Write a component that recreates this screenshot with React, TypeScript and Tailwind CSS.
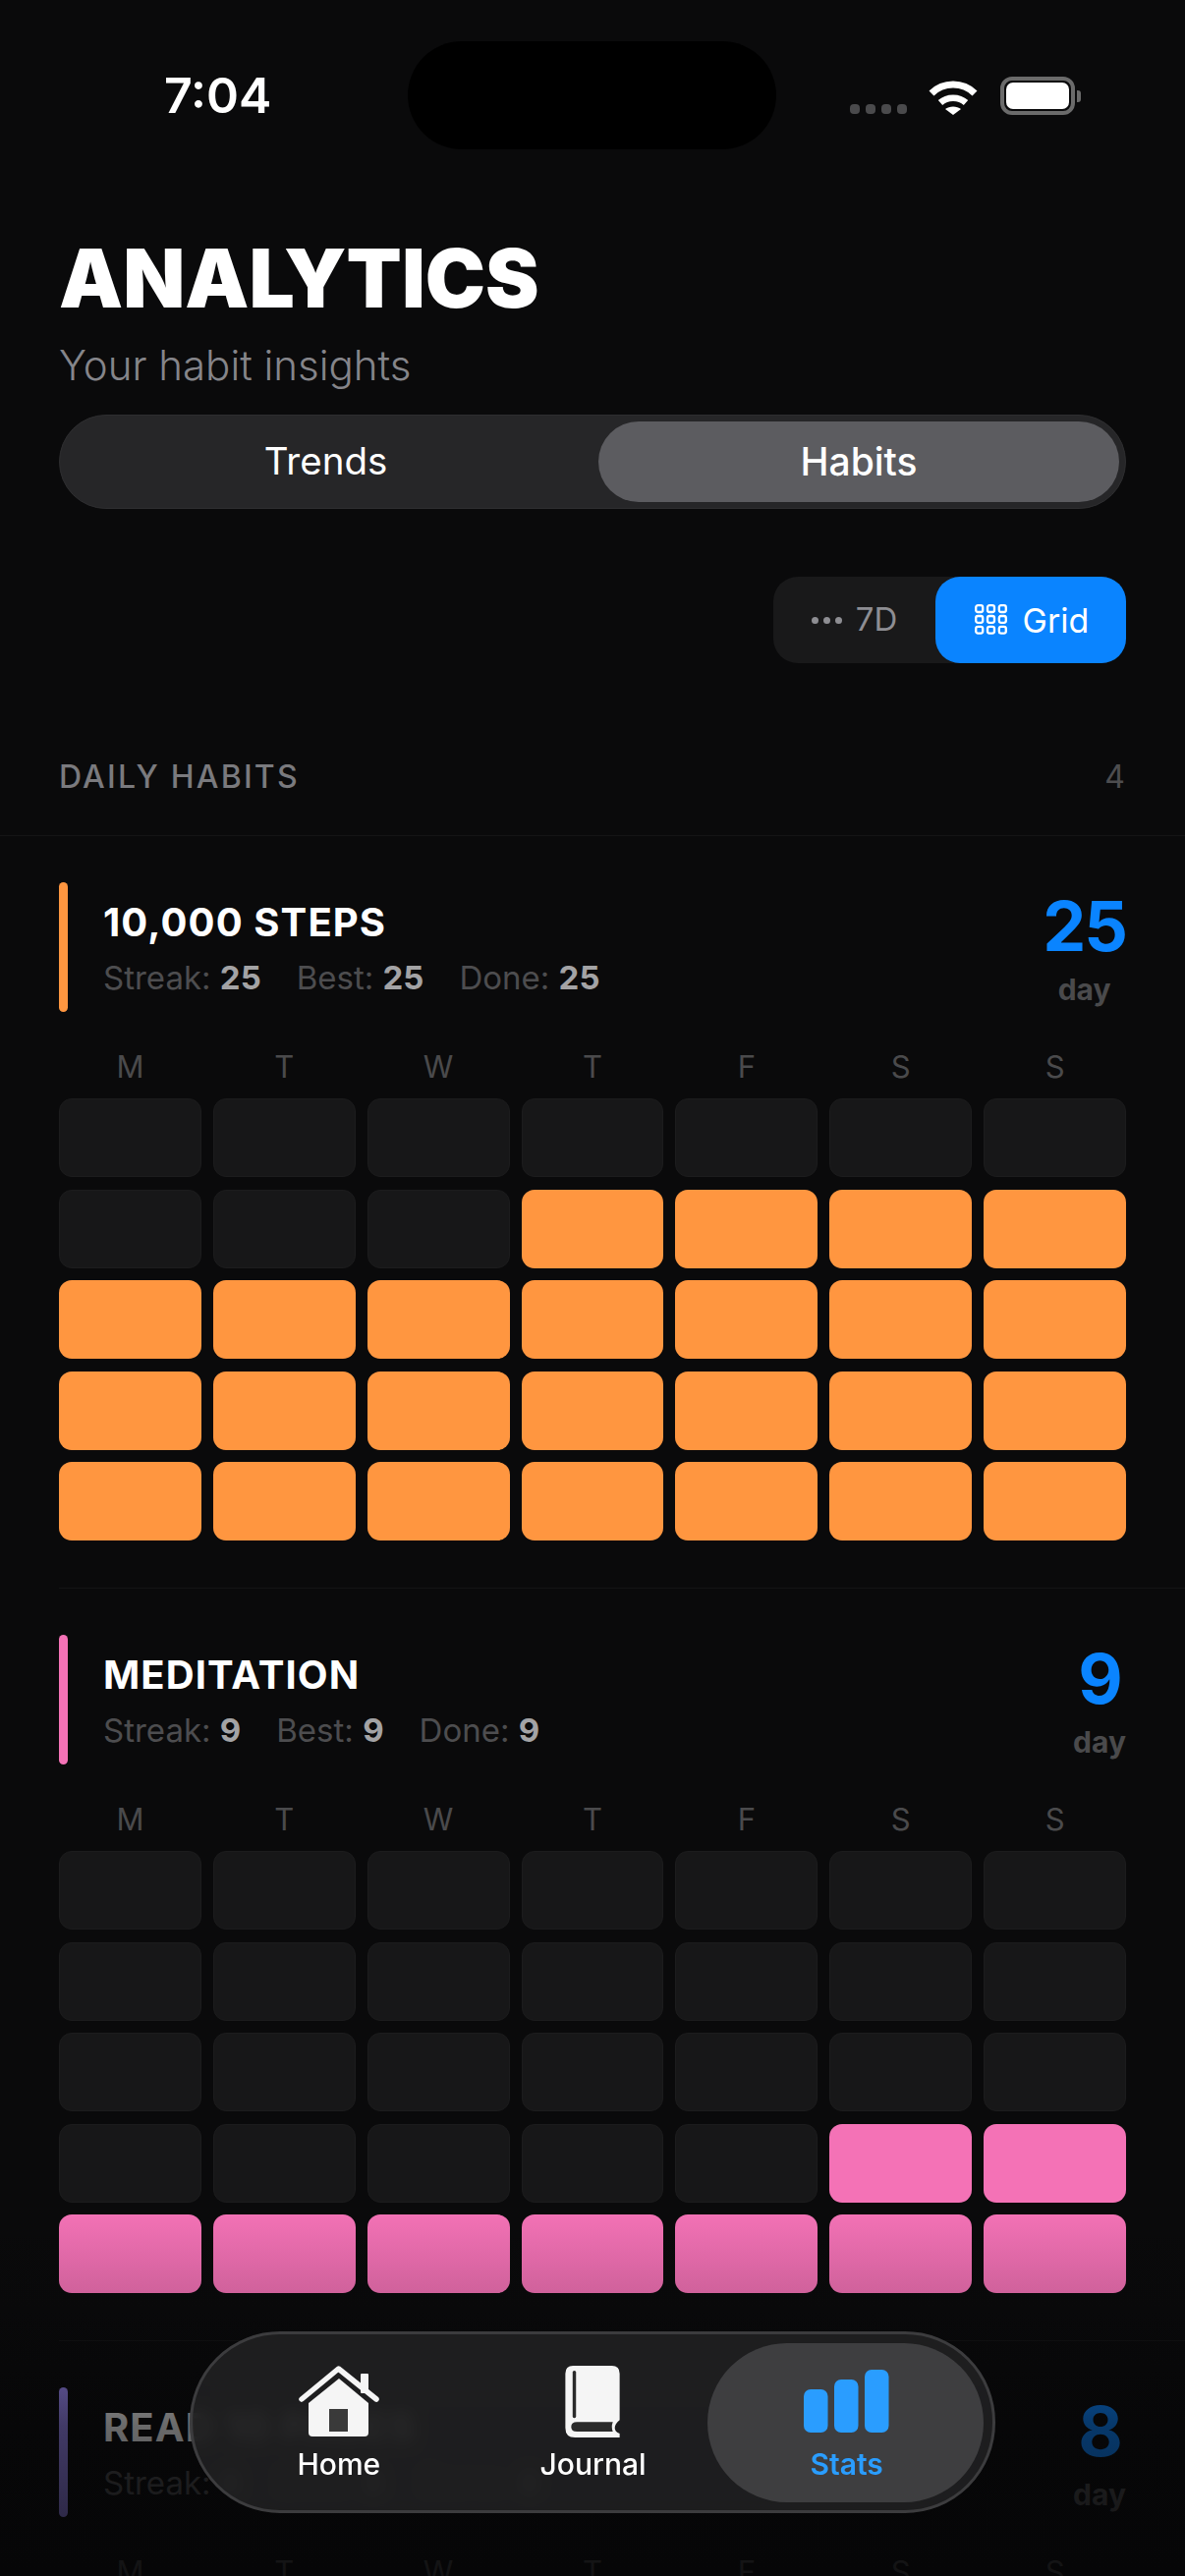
import React from "react";

const days = ["M", "T", "W", "T", "F", "S", "S"];

const habits = [
  { name: "10,000 STEPS", n: 25, bar: "bg-[#ff9640]", fill: "bg-[#ff9640]" },
  { name: "MEDITATION", n: 9, bar: "bg-[#f472b6]", fill: "bg-[#f472b6]" },
  { name: "READ 10 PAGES", n: 8, bar: "bg-[#9a88f5]", fill: "bg-[#9a88f5]" },
];

function Wifi() {
  return (
    <svg width="50" height="37" viewBox="0 0 50 37" fill="none">
      <path d="M3 15 C15 3 35 3 47 15" stroke="#fff" strokeWidth="7" />
      <path d="M12 24.5 C19 18 31 18 38 24.5" stroke="#fff" strokeWidth="6.5" />
      <path d="M17 31 C21 27.5 29 27.5 33 31 L25 37 Z" fill="#fff" />
    </svg>
  );
}

function Battery() {
  return (
    <div className="flex items-center gap-[2px]">
      <div className="w-[76px] h-[39px] rounded-[12px] border-[4px] border-[#6b6b6b] p-[2px]">
        <div className="w-full h-full rounded-[7px] bg-white" />
      </div>
      <div className="w-[4px] h-[12px] rounded-r-[3px] bg-[#6b6b6b]" />
    </div>
  );
}

function GridIcon() {
  const pts = [0, 1, 2];
  return (
    <svg width="33" height="32" viewBox="0 0 33 32" fill="none">
      {pts.map((r) =>
        pts.map((c) => (
          <rect key={`${r}-${c}`} x={1.2 + c * 11.8} y={1.2 + r * 10.8} width="7" height="6.8" rx="2" stroke="#fff" strokeWidth="2.3" />
        ))
      )}
    </svg>
  );
}

function HomeIcon() {
  return (
    <svg width="82" height="73" viewBox="0 0 82 73" fill="none">
      <rect x="63" y="8" width="8" height="20" rx="1" fill="#f5f5f5" />
      <path d="M3 34 L40.5 3 L79 34" stroke="#f5f5f5" strokeWidth="5.5" strokeLinecap="round" strokeLinejoin="round" />
      <path d="M41 13 L71 38 V68 Q71 72 67 72 H14 Q10 72 10 68 V38 Z" fill="#f5f5f5" />
      <rect x="31" y="44" width="19" height="23" fill="#3a3a3a" />
    </svg>
  );
}

function BookIcon() {
  return (
    <svg width="57" height="73" viewBox="0 0 57 74" fill="none">
      <path
        d="M8 0 H48 Q56 0 56 8 V56 Q51 60 51 64 Q51 68 56 70 V74 H10 Q0 74 0 64 V8 Q0 0 8 0 Z"
        fill="#f5f5f5"
      />
      <rect x="7.5" y="5" width="3.5" height="49" rx="1.7" fill="#2a2a2a" />
      <path d="M12 58 H49 Q47 63 49 68 H12 Q6 68 6 63 Q6 58 12 58 Z" fill="#2a2a2a" />
    </svg>
  );
}

function StatsIcon() {
  return (
    <svg width="87" height="64" viewBox="0 0 87 64" fill="#2a9dff">
      <rect x="0" y="20" width="24.5" height="44" rx="7" />
      <rect x="31" y="10" width="24.5" height="54" rx="7" />
      <rect x="62" y="0" width="24.5" height="64" rx="7" />
    </svg>
  );
}

function Stat({ label, value }: { label: string; value: number }) {
  return (
    <span className="text-[#4d4d4f]">
      {label} <span className="font-bold text-[#a3a3a5]">{value}</span>
    </span>
  );
}

function Habit({ h }: { h: (typeof habits)[number] }) {
  const cells = Array.from({ length: 35 }, (_, i) => i >= 35 - h.n);
  return (
    <section className="pl-[60px]">
      <div className="pt-[47px] pb-[48px] pr-[60px] border-b border-[#141415]">
        <div className="flex h-[132px] justify-between">
          <div className="flex">
            <div className={`w-[9px] h-[132px] rounded-full ${h.bar}`} />
            <div className="ml-[36px] pt-[17px]">
              <div className="text-[40px] leading-[48px] font-bold tracking-[1.1px] text-white">{h.name}</div>
              <div className="mt-[12px] flex gap-[36px] text-[33px] leading-[40px]">
                <Stat label="Streak:" value={h.n} />
                <Stat label="Best:" value={h.n} />
                <Stat label="Done:" value={h.n} />
              </div>
            </div>
          </div>
          <div className="flex flex-col items-center pt-[6px]">
            <div className="text-[70px] leading-[78px] font-bold tracking-[-2px] text-[#0a84ff]">{h.n}</div>
            <div className="mt-[7px] text-[30px] leading-[36px] font-bold text-[#4a4a4c]">day</div>
          </div>
        </div>
        <div className="mt-[36px] grid grid-cols-7 gap-x-[12px]">
          {days.map((d, i) => (
            <div key={i} className="text-center text-[31px] leading-[40px] text-[#4a4a4c]">
              {d}
            </div>
          ))}
        </div>
        <div className="mt-[12px] grid grid-cols-7 gap-x-[12px] gap-y-[12.5px]">
          {cells.map((on, i) => (
            <div
              key={i}
              className={`h-[80px] rounded-[13px] ${on ? h.fill : "bg-[#171718] border border-[#1c1c1d]"}`}
            />
          ))}
        </div>
      </div>
    </section>
  );
}

export default function App() {
  return (
    <div
      className="relative w-[1206px] h-[2622px] overflow-hidden bg-[#0a0a0b] text-white"
      style={{ fontFamily: "Inter, 'Liberation Sans', sans-serif" }}
    >
      <header className="h-[236px] pl-[167px] pt-[42px] flex items-start">
        <div className="w-[107px] mt-[31px] text-[50px] leading-[48px] font-semibold whitespace-nowrap">7:04</div>
        <div className="ml-[141px] w-[375px] h-[110px] rounded-[55px] bg-black" />
        <div className="ml-[75px] mt-[36px] w-[235px] flex items-end">
          <div className="flex gap-[6px] mb-[1px]">
            {[0, 1, 2, 3].map((i) => (
              <div key={i} className="w-[10px] h-[10px] rounded-[4px] bg-[#4a4a4c]" />
            ))}
          </div>
          <div className="ml-[22px] mr-[23px]">
            <Wifi />
          </div>
          <Battery />
        </div>
      </header>

      <div className="px-[60px]">
        <h1 className="text-[82px] leading-[96px] font-black">ANALYTICS</h1>
        <p className="mt-[15px] text-[42px] leading-[50px] font-light text-[#85858a]">Your habit insights</p>
        <div className="mt-[25px] h-[96px] rounded-[48px] bg-[#262628] border border-[#2e2e30] p-[6px] flex gap-[13px]">
          <div className="flex-1 flex items-center justify-center text-[38.5px] font-normal">Trends</div>
          <div className="w-[530px] rounded-[42px] bg-[#5c5c60] flex items-center justify-center text-[39px] font-medium">
            Habits
          </div>
        </div>
        <div className="mt-[69px] flex justify-end">
          <div className="h-[88px] w-[359px] rounded-[25px] bg-[#19191a] flex">
            <div className="flex-1 flex items-center justify-center gap-[14px] text-[33px] text-[#8e8e93]">
              <span className="flex gap-[5px]">
                <span className="w-[7px] h-[7px] rounded-full bg-[#8e8e93]" />
                <span className="w-[7px] h-[7px] rounded-full bg-[#8e8e93]" />
                <span className="w-[7px] h-[7px] rounded-full bg-[#8e8e93]" />
              </span>
              7D
            </div>
            <div className="w-[194px] rounded-[25px] bg-[#0a84ff] flex items-center justify-center gap-[16px] pl-[2px] text-[34px] text-white">
              <GridIcon />
              Grid
            </div>
          </div>
        </div>
        <div className="mt-[93px] flex justify-between items-center h-[46px] text-[32px]">
          <span className="font-medium tracking-[2.2px] text-[#7a7a7e]">DAILY HABITS</span>
          <span className="mr-[1px] text-[#4d4d4f]">4</span>
        </div>
      </div>
      <div className="mt-[36px] border-b border-[#141415]" />

      {habits.map((h) => (
        <Habit key={h.name} h={h} />
      ))}

      {/* bottom fade over the scrolling content */}
      <div className="absolute inset-x-0 bottom-0 h-[372px] bg-[linear-gradient(to_bottom,#05050600_0%,#05050629_24%,#05050699_59%,#050506cc_100%)]" />

      {/* floating tab bar */}
      <nav className="absolute left-[193px] top-[2373px] w-[820px] h-[185px] rounded-[92px] bg-[#212122e0] backdrop-blur-[8px] border-[3px] border-[#3c3c3e] flex items-center px-[9px]">
        <div className="w-[258px] flex flex-col items-center pl-[22px] pt-[3px]">
          <HomeIcon />
          <span className="mt-[9px] text-[30px] leading-[36px] font-medium text-white">Home</span>
        </div>
        <div className="w-[258px] flex flex-col items-center pl-[24px] pt-[3px]">
          <BookIcon />
          <span className="mt-[9px] text-[30px] leading-[36px] font-medium text-white">Journal</span>
        </div>
        <div className="w-[281px] h-[162px] rounded-[81px] bg-[#3e3e40] flex flex-col items-center justify-center pt-[6px] pl-[2px]">
          <StatsIcon />
          <span className="mt-[14px] text-[30px] leading-[36px] font-semibold text-[#2a9dff]">Stats</span>
        </div>
      </nav>
    </div>
  );
}
